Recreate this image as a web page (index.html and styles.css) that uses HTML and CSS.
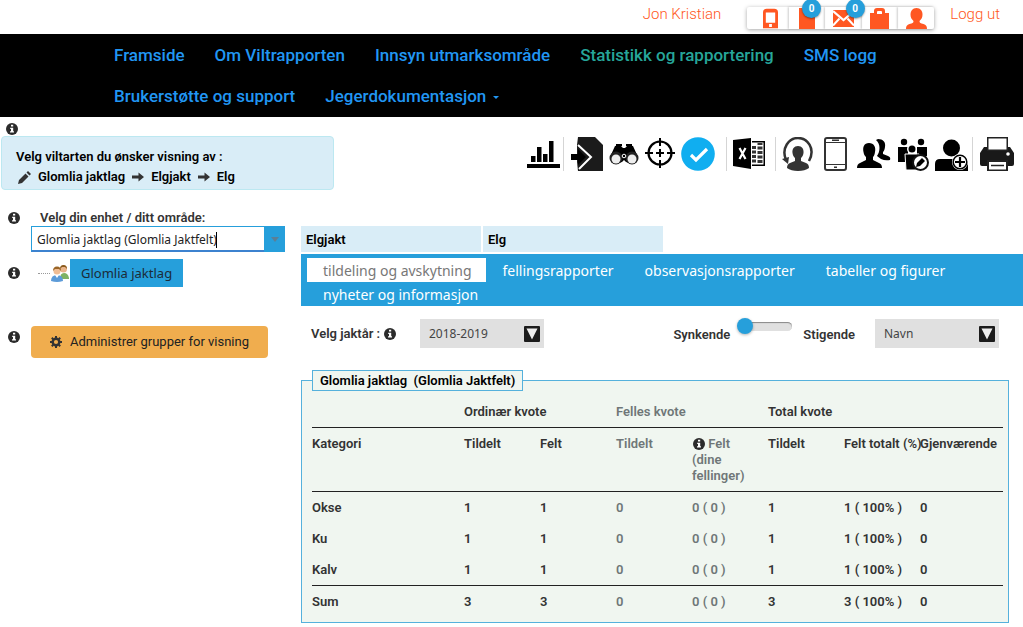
FILE: index.html
```html
<!DOCTYPE html>
<html lang="no">
<head>
<meta charset="utf-8">
<meta name="viewport" content="width=device-width, initial-scale=1">
<title>Viltrapporten</title>
<link rel="stylesheet" href="styles.css">
</head>
<body>
<svg class="sprite" aria-hidden="true">
  <symbol id="info" viewBox="0 0 12 12"><circle cx="6" cy="6" r="6" fill="#2b2b2b"/><path d="M5 1.800h2.200v1.700H5zM4.200 4.700h3v3.600H8v1.300H4V8.300h1V6h-.8z" fill="#fff"/></symbol>
  <symbol id="arrow" viewBox="0 0 12 10"><path d="M0 3.500h6.500V.5L12 5 6.500 9.500v-3H0z" fill="#333"/></symbol>
  <symbol id="down" viewBox="0 0 16 16"><rect width="16" height="16" rx="1" fill="#1c1c1c"/><path d="M2.500 2.500h11L8 13.500z" fill="#eee"/></symbol>
</svg>

<header class="topbar">
  <a class="user" href="#">Jon Kristian</a>
  <div class="shortcuts">
    <button type="button" class="shortcut mobile" aria-label="Mobil"><svg width="15" height="22" viewBox="0 0 16 22"><path fill-rule="evenodd" d="M4 1h8q4 0 4 4v17H0V5q0-4 4-4zM3 5v11h10V5zM6.500 17.500v3h3v-3z"/></svg></button>
    <button type="button" class="shortcut" aria-label="Oppgaver"><svg width="16" height="22" viewBox="0 0 16 22"><path d="M0 1h16v21H0z"/></svg><span class="badge">0</span></button>
    <button type="button" class="shortcut mail" aria-label="Meldinger"><svg width="21" height="22" viewBox="0 0 21 22"><path d="M0 3h21v17H0z"/><path d="M0 4l10.500 9L21 4" fill="none" stroke="#fff" stroke-width="2.200"/><path d="M0 18.500l6.500-7M21 18.500l-6.500-7" fill="none" stroke="#fff" stroke-width="2"/></svg><span class="badge">0</span></button>
    <button type="button" class="shortcut" aria-label="Dokumenter"><svg width="19" height="22" viewBox="0 0 19 22"><path fill-rule="evenodd" d="M4 6V4q0-3 3-3h5q3 0 3 3v2h4v16H0V6zM7 7h5V5q0-1-1-1H8Q7 4 7 5z"/></svg></button>
    <button type="button" class="shortcut" aria-label="Profil"><svg width="21" height="22" viewBox="0 0 21 22"><path d="M10.500 1c4 0 6 3 6 6.500 0 3-1 4.500-3 6.500 0 2 1 2 4 3 2.500 1 3.500 2 3.500 5H0c0-3 1-4 3.500-5 3-1 4-1 4-3-2-2-3-3.500-3-6.500C4.500 4 6.500 1 10.500 1z"/></svg></button>
  </div>
  <a class="logout" href="#">Logg ut</a>
</header>

<nav class="mainnav">
  <a href="#">Framside</a>
  <a href="#">Om Viltrapporten</a>
  <a href="#">Innsyn utmarksområde</a>
  <a href="#" class="current">Statistikk og rapportering</a>
  <a href="#">SMS logg</a>
  <a href="#">Brukerstøtte og support</a>
  <a href="#">Jegerdokumentasjon <span class="caret-down"></span></a>
</nav>

<section class="intro">
  <div class="species">
    <svg class="info" width="12" height="12"><use href="#info"/></svg>
    <div class="notice">
      <div>Velg viltarten du ønsker visning av :</div>
      <div class="crumbs">
        <svg width="13" height="13" viewBox="0 0 13 13"><path d="M0 13l1-4 6.500-6.500 3 3L4 12zM8.500 1.500L10 0l3 3-1.500 1.500z" fill="#333"/></svg>
        <span>Glomlia jaktlag</span><svg width="12" height="10"><use href="#arrow"/></svg><span>Elgjakt</span><svg width="12" height="10"><use href="#arrow"/></svg><span>Elg</span>
      </div>
    </div>
  </div>
  <div class="tools">
    <button type="button" class="tool" aria-label="Statistikk"><svg width="33" height="34" viewBox="0 0 33 34"><path d="M0 27h33v4H0zM4 19h4.500v6H4zM10 10h4.500v15H10zM16 17h4.500v8H16zM22 4h4.500v21H22z"/></svg></button>
    <i class="divider"></i>
    <button type="button" class="tool" aria-label="Importer"><svg width="32" height="34" viewBox="0 0 32 34"><path d="M7 0h17l8 8v26H7l-1-9V8z" fill="#1b1b1b"/><path d="M7 8l13 12L8 32" fill="none" stroke="#fff" stroke-width="2"/><path d="M0 17h7v-5l8 8-8 8v-5H0z"/></svg></button>
    <button type="button" class="tool" aria-label="Observasjoner"><svg width="30" height="34" viewBox="0 0 30 34"><path d="M6 9l5-1 3 3h2l3-3 5 1 5 11-6 7-6-2-2-2-2 2-6 2-6-7z"/><path d="M7 8h6M17 8h6" stroke="#000" stroke-width="2"/><circle cx="7" cy="21" r="6.500" fill="#222"/><circle cx="7" cy="22" r="4.500" fill="#eee"/><circle cx="23" cy="21" r="6.500" fill="#222"/><circle cx="23" cy="22" r="4.500" fill="#eee"/><circle cx="15" cy="19" r="1.800" fill="none" stroke="#fff"/></svg></button>
    <button type="button" class="tool" aria-label="Felling"><svg width="30" height="34" viewBox="0 0 30 34"><g fill="none" stroke="#000"><circle cx="15" cy="16" r="11.500" stroke-width="2.200"/><path d="M15 1v8M15 23v8M0 16h8M22 16h8M15 12v8M11 16h8" stroke-width="2"/></g></svg></button>
    <button type="button" class="tool" aria-label="Godkjent"><svg width="34" height="34" viewBox="0 0 34 34"><circle cx="17" cy="17" r="16.800" fill="#10aef0"/><path d="M10 18l5 5L26 12" fill="none" stroke="#fff" stroke-width="3.200"/></svg></button>
    <i class="divider wide"></i>
    <button type="button" class="tool" aria-label="Excel"><svg width="32" height="34" viewBox="0 0 32 34"><path d="M0 3l18-2v31L0 29z"/><path d="M19 4h13v25H19z"/><path d="M19 5.500h11.500v22H19z" fill="#fff"/><path d="M19 9h4v3h-4zM19 13.500h4v3h-4zM19 18h4v3h-4zM19 22.500h4v3h-4zM24.500 6h5v2h-5zM24.500 9.500h5v3h-5zM24.500 14h5v3h-5zM24.500 18.500h5v3h-5zM24.500 23h5v3h-5z" fill="#333"/><path d="M6.500 11l6 11M12.500 11l-6 11" stroke="#fff" stroke-width="2.200"/></svg></button>
    <i class="divider far"></i>
    <button type="button" class="tool" aria-label="Oppdater bruker"><svg width="32" height="34" viewBox="0 0 32 34"><path d="M16 9c4 0 6 3 5.500 7-.5 3-1.500 4-2.500 5v3l5 2q3 1 3 5-4 3-11 3T5 31q0-4 3-5l5-2v-3c-1-1-2-2-2.500-5C10 12 12 9 16 9z" fill="#333"/><path d="M4 23C-1 11 7 1 16 1s18 10 11 23" fill="none" stroke="#333" stroke-width="2.500"/><path d="M0 22l7-2-1 7z" fill="#333"/></svg></button>
    <button type="button" class="tool phone" aria-label="Mobil"><svg width="23" height="34" viewBox="0 0 23 34"><rect x="1" y="1" width="21" height="32" rx="2" fill="#fff" stroke="#333" stroke-width="2"/><path d="M1 5.500h21M1 27.500h21" stroke="#333"/><path d="M8 3.300h7M10 30.300h3" stroke="#333" stroke-width="1.500"/></svg></button>
    <button type="button" class="tool" aria-label="Brukere"><svg width="34" height="34" viewBox="0 0 34 34"><path d="M21 2c5 0 8 3 7 8-.5 3-1 4-2 5v2l5 2q3 1 2 4-5 1-9-1l-4-3c3-4 4-12-1-16z"/><path d="M12 6c5 0 7 4 6 9-.5 3-1 4-2 5v3l6 3q3 1 3 5H0q0-4 3-5l6-3v-3c-1-1-2-2-2.500-5C5.500 10 7 6 12 6z"/></svg></button>
    <button type="button" class="tool" aria-label="Rediger gruppe"><svg width="32" height="34" viewBox="0 0 32 34"><circle cx="7" cy="5" r="3.200"/><circle cx="24" cy="5" r="3.200"/><path d="M1 10h10v15H1zM20 10h10v9H20z"/><circle cx="15" cy="12" r="5" fill="#fff"/><circle cx="15" cy="12" r="3.500"/><path d="M8 17h14v16H9z" stroke="#fff"/><circle cx="23.500" cy="25.500" r="7.500" fill="#fff" stroke="#111" stroke-width="2"/><path d="M19 30l1-4 5-5 3 3-5 5z"/></svg></button>
    <button type="button" class="tool" aria-label="Legg til bruker"><svg width="34" height="34" viewBox="0 0 34 34"><circle cx="16.500" cy="11" r="8.500"/><path d="M0 34v-7q0-5 5-5h22q6 1 6 6v6z"/><circle cx="25" cy="25" r="8" fill="#fff"/><circle cx="25" cy="25" r="6.800" fill="#fff" stroke="#000" stroke-width="1.500"/><path d="M25 20v10M20 25h10" stroke="#000" stroke-width="2.200"/></svg></button>
    <i class="divider"></i>
    <button type="button" class="tool" aria-label="Skriv ut"><svg width="34" height="34" viewBox="0 0 34 34"><path d="M4 10h26l4 6v11q0 2-2 2H2q-2 0-2-2V16z" fill="#191919"/><path d="M7 0h21v14H7z" fill="#222"/><path d="M8.500 1.500h18v11h-18z" fill="#fff"/><circle cx="28" cy="17" r="1.800" fill="#fff"/><path d="M7 23h21v11H7z" fill="#222"/><path d="M9 25h17v7.500H9z" fill="#fff"/><path d="M11 28.500h13" stroke="#222" stroke-width="1.500"/></svg></button>
  </div>
</section>

<main class="workspace">
  <aside class="side">
    <div class="siderow">
      <svg class="info" width="12" height="12"><use href="#info"/></svg>
      <div class="unit">
        <label for="unit">Velg din enhet / ditt område:</label>
        <div class="combo">
          <input id="unit" type="text" value="Glomlia jaktlag (Glomlia Jaktfelt)">
          <span class="textcaret"></span>
          <button type="button" aria-label="Vis enheter"><svg width="8" height="5" viewBox="0 0 8 5"><path d="M0 0h8L4 5z" fill="#5b7f96"/></svg></button>
        </div>
      </div>
    </div>
    <div class="siderow tree">
      <svg class="info" width="12" height="12"><use href="#info"/></svg>
      <span class="branch"></span>
      <svg width="18" height="17" viewBox="0 0 18 17"><circle cx="12.500" cy="4" r="3.500" fill="#e9b48a"/><path d="M9 4q0-4 3.500-4T16 4l-2-2h-3z" fill="#8a5a1d"/><path d="M9 14q0-6 4-6t5 5v1z" fill="#7fb262"/><circle cx="6" cy="6" r="3.500" fill="#f0bd94"/><path d="M2 6q0-4.500 4-4.500T10 6L8 4H4z" fill="#9a6526"/><path d="M0 16q0-6 6-6t6 6q-6 2-12 0z" fill="#5c9bd8"/><path d="M4 10l2 3 2-3z" fill="#fff"/></svg>
      <button type="button" class="node">Glomlia jaktlag</button>
    </div>
    <div class="siderow groups">
      <svg class="info" width="12" height="12"><use href="#info"/></svg>
      <button type="button" class="admin"><svg width="12" height="12" viewBox="0 0 12 12"><circle cx="6" cy="6" r="3.300" fill="none" stroke="#333" stroke-width="2.400"/><path d="M6 0v2M6 10v2M0 6h2M10 6h2M1.800 1.800l1.400 1.400M8.800 8.800l1.400 1.400M1.800 10.200l1.400-1.400M8.800 3.200l1.400-1.400" stroke="#333" stroke-width="2"/></svg>Administrer grupper for visning</button>
    </div>
  </aside>

  <div class="content">
    <div class="heads"><div>Elgjakt</div><div>Elg</div></div>
    <nav class="tabs">
      <a href="#" class="active">tildeling og avskytning</a>
      <a href="#">fellingsrapporter</a>
      <a href="#">observasjonsrapporter</a>
      <a href="#">tabeller og figurer</a>
      <a href="#">nyheter og informasjon</a>
    </nav>
    <div class="filters">
      <label for="year" class="yearlabel">Velg jaktår : <svg width="12" height="12"><use href="#info"/></svg></label>
      <div class="pick"><select id="year"><option>2018-2019</option></select><svg width="16" height="16"><use href="#down"/></svg></div>
      <div class="order">
        <label for="order">Synkende</label>
        <input id="order" type="range" min="0" max="1" value="0">
        <span>Stigende</span>
      </div>
      <div class="pick"><select aria-label="Sorter etter"><option>Navn</option></select><svg width="16" height="16"><use href="#down"/></svg></div>
    </div>

    <fieldset class="quota">
      <legend>Glomlia jaktlag &nbsp;(Glomlia Jaktfelt)</legend>
      <table>
        <colgroup><col class="c-cat"><col class="c-num" span="6"><col></colgroup>
        <thead>
          <tr><th></th><th colspan="2">Ordinær kvote</th><th colspan="2" class="muted">Felles kvote</th><th colspan="3">Total kvote</th></tr>
          <tr><th>Kategori</th><th>Tildelt</th><th>Felt</th><th class="muted">Tildelt</th><th class="muted shared"><svg width="12" height="12"><use href="#info"/></svg> Felt (dine fellinger)</th><th>Tildelt</th><th class="nowrap">Felt totalt (%)</th><th>Gjenværende</th></tr>
        </thead>
        <tbody>
          <tr><td>Okse</td><td>1</td><td>1</td><td class="muted">0</td><td class="muted">0 ( 0 )</td><td>1</td><td>1 ( 100% )</td><td>0</td></tr>
          <tr><td>Ku</td><td>1</td><td>1</td><td class="muted">0</td><td class="muted">0 ( 0 )</td><td>1</td><td>1 ( 100% )</td><td>0</td></tr>
          <tr><td>Kalv</td><td>1</td><td>1</td><td class="muted">0</td><td class="muted">0 ( 0 )</td><td>1</td><td>1 ( 100% )</td><td>0</td></tr>
        </tbody>
        <tfoot>
          <tr><td>Sum</td><td>3</td><td>3</td><td class="muted">0</td><td class="muted">0 ( 0 )</td><td>3</td><td>3 ( 100% )</td><td>0</td></tr>
        </tfoot>
      </table>
    </fieldset>
  </div>
</main>
</body>
</html>
```
FILE: styles.css
```css
* { box-sizing: border-box; }
body { margin: 0; background: #fff; color: #333; font: 600 13px/16px Roboto, sans-serif; }
a { text-decoration: none; }
button, input, select { font: inherit; color: inherit; border: 0; border-radius: 0; margin: 0; padding: 0; background: none; }
svg { display: block; flex: none; }
.sprite { position: absolute; width: 0; height: 0; }

/* Top bar */
.topbar { display: flex; justify-content: flex-end; height: 34px; padding-right: 23px; font-weight: 300; font-size: 15px; line-height: 28px; }
.topbar a { color: #ff5722; }
.shortcuts { display: flex; align-self: flex-start; margin: 7px 16px 0 26px; width: 187px; height: 22px; border-radius: 2px; box-shadow: 0 1px 4px rgba(0,0,0,.35); }
.shortcut { position: relative; flex: 1; display: flex; justify-content: center; fill: #ff5722; }
.shortcut + .shortcut { box-shadow: -1px 0 2px rgba(0,0,0,.2); }
.mobile { padding-left: 5px; }
.badge { position: absolute; z-index: 1; top: -8px; right: 4px; width: 19px; height: 19px; border-radius: 50%; background: #269fdb; color: #fff; font: 700 10px/19px Roboto, sans-serif; text-align: center; box-shadow: 0 1px 2px rgba(0,0,0,.4); }
.mail { z-index: 1; }
.mail .badge { right: -3px; }

/* Main navigation */
.mainnav { display: flex; flex-wrap: wrap; padding: 1px 0 0 99px; background: #000; font-size: 17px; font-weight: 500; line-height: 41px; }
.mainnav a { padding: 0 15px; color: #2196f3; }
.mainnav .current { color: #26a69a; }
.caret-down { display: inline-block; margin-left: 2px; vertical-align: middle; border: 3px solid transparent; border-top-color: currentColor; border-bottom: 0; }

/* Species notice and tools */
.intro { display: flex; justify-content: space-between; align-items: flex-start; padding: 6px 9px 0 1px; }
.species .info { margin: 0 0 1px 5px; }
.notice { width: 333px; padding: 12px 14px 4px; border: 1px solid #bce8f1; border-radius: 4px; background: #d9edf7; color: #000; }
.crumbs { display: flex; align-items: center; gap: 7px; margin: 4px 0 0 2px; }
.tools { display: flex; align-items: center; gap: 6px; padding-top: 14px; }
.tool { flex: none; }
.divider { width: 1px; height: 34px; margin: 0 1px 0 -3px; background: #d5d5d5; }
.divider.wide { margin: 0 0 0 5px; }
.divider.far { margin: 0 0 0 4px; }
.phone { margin: 0 4px; }

/* Workspace */
.workspace { display: grid; grid-template-columns: 301px 1fr; padding-top: 20px; }
.side { padding-left: 8px; }
.siderow { display: flex; align-items: center; }
.siderow:first-child { align-items: flex-start; }
.siderow:first-child .info { margin-top: 2px; }
.unit { flex: 1; margin: 0 16px 0 11px; }
.unit label { display: block; padding-left: 9px; }
.combo { position: relative; display: flex; height: 26px; font: 12px/24px "Noto Sans", sans-serif; color: #222; }
.combo input { flex: 1; min-width: 0; padding: 2px 5px 0; border: 1px solid #269fdb; border-right: 0; border-bottom: 2px solid #3c82cf; }
.combo button { display: flex; align-items: center; justify-content: center; width: 21px; background: #269fdb; }
.textcaret { position: absolute; left: 185px; top: 6px; width: 1px; height: 16px; background: #000; }
.tree { margin-top: 7px; }
.tree .info { margin-right: 18px; }
.branch { width: 12px; border-top: 1px dotted #999; margin-right: 1px; }
.node { height: 28px; margin-left: 1px; padding: 0 11px; background: #269fdb; color: #1b2b38; font: 13px/28px "Noto Sans", sans-serif; }
.groups { align-items: flex-start; margin-top: 39px; }
.groups .info { margin-top: 5px; }
.admin { display: flex; align-items: center; justify-content: center; gap: 8px; width: 237px; height: 32px; margin-left: 11px; border-radius: 4px; background: #f0ad4e; color: #222; font-weight: 400; }

/* Content */
.content { padding-top: 16px; }
.heads { display: flex; gap: 2px; color: #000; }
.heads div { width: 180px; height: 26px; padding: 0 5px; background: #d9edf7; line-height: 28px; }
.tabs { display: flex; flex-wrap: wrap; column-gap: 1px; margin-top: 2px; padding: 4px 6px 0; background: #269fdb; font: 14px/24px "Noto Sans", sans-serif; }
.tabs a { height: 24px; padding: 2px 14px 0 16px; line-height: 22px; color: #fff; }
.tabs .active { background: #fff; color: #777; }
.filters { display: flex; align-items: center; height: 29px; margin: 13px 24px 0 10px; }
.yearlabel { display: flex; align-items: center; gap: 4px; width: 109px; }
.pick { position: relative; width: 124px; }
.pick select { appearance: none; width: 100%; height: 29px; padding: 0 9px; background: #e0e0e0; font: 12px/29px "Noto Sans", sans-serif; color: #444; }
.pick svg { position: absolute; right: 4px; top: 7px; pointer-events: none; }
.order { display: flex; align-items: center; align-self: stretch; gap: 7px; margin: 3px 20px 0 auto; }
.order input { align-self: flex-start; width: 55px; height: 9px; margin-right: 4px; appearance: none; }
.order input::-webkit-slider-runnable-track { height: 9px; margin-left: 4px; border-radius: 5px; background: #e0e0e0; box-shadow: inset 0 1px 1px #888; }
.order input::-webkit-slider-thumb { appearance: none; width: 16px; height: 16px; margin: -4px 0 0 -4px; border-radius: 50%; background: #269fdb; box-shadow: 0 1px 3px rgba(0,0,0,.3); }

/* Quota table */
.quota { min-width: 0; margin: 22px 14px 0 0; padding: 5px 5px 5px 10px; border: 1px solid #55b1dc; background: #f0f6f0; }
.quota legend { height: 21px; padding: 0 7px; border: 1px solid #55b1dc; background: #f0f6f0; color: #000; line-height: 20px; }
table { width: 100%; table-layout: fixed; border-collapse: collapse; }
.c-cat { width: 22%; }
.c-num { width: 11%; }
th, td { padding: 8px 0 7px; text-align: left; vertical-align: top; font-weight: inherit; }
thead tr { border-bottom: 1px solid #222; }
tfoot tr { border-top: 1px solid #222; }
th svg { display: inline-block; margin-left: 1px; vertical-align: -2px; }
.shared { padding-right: 14px; }
.nowrap { white-space: nowrap; }
.muted { color: #6f7678; }
```
